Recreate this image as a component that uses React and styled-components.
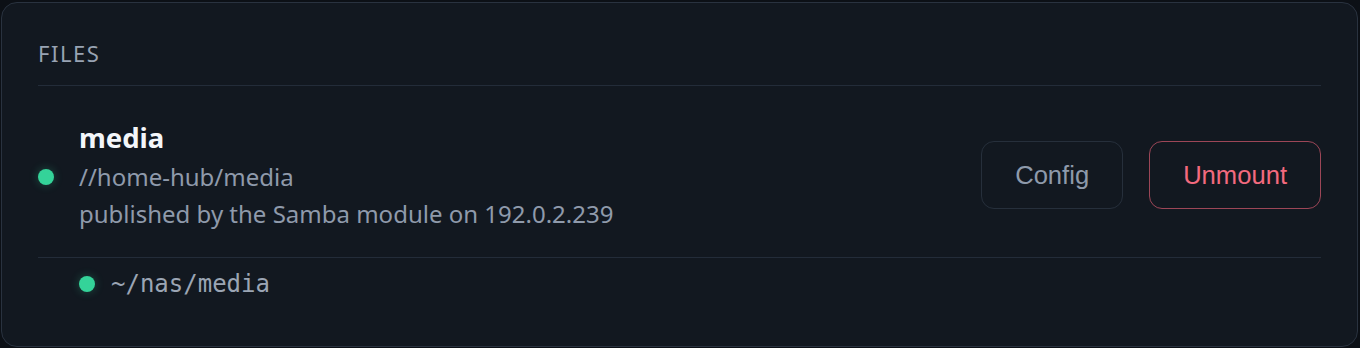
import React from 'react';
import styled, { createGlobalStyle } from 'styled-components';

const GlobalStyle = createGlobalStyle`
  html, body {
    margin: 0;
    padding: 0;
    background: #0c1016;
  }

  body {
    font-family: 'Noto Sans', 'DejaVu Sans', sans-serif;
  }
`;

const Page = styled.div`
  padding: 2px 2px 2px 1px;
`;

const Card = styled.section`
  background: #121820;
  border: 1px solid #29323f;
  border-radius: 16px;
  padding: 36px;
`;

const Header = styled.h2`
  margin: 0;
  padding-bottom: 17px;
  border-bottom: 1px solid #232c39;
  font-size: 22px;
  line-height: 29px;
  font-weight: 400;
  letter-spacing: 1.5px;
  color: #98a3b3;
  text-transform: uppercase;
`;

const ShareRow = styled.div`
  display: flex;
  align-items: center;
  padding: 31px 0 25px;
  border-bottom: 1px solid #232c39;
`;

const Dot = styled.span`
  flex: none;
  width: 16px;
  height: 16px;
  border-radius: 50%;
  background: #34d399;
  box-shadow: 0 0 10px rgba(52, 211, 153, 0.3);
  margin-right: ${(p) => p.$gap}px;
  margin-top: ${(p) => p.$drop || 0}px;
`;

const Info = styled.div`
  flex: 1;
  min-width: 0;
  padding-top: 1px;
`;

const Title = styled.div`
  font-size: 27.5px;
  line-height: 40px;
  font-weight: 700;
  color: #f3f6fa;
`;

const Meta = styled.div`
  font-size: 24px;
  line-height: 37px;
  color: #8f9aab;
`;

const Actions = styled.div`
  display: flex;
  gap: 26px;
  margin-top: 1px;
`;

const Button = styled.button`
  height: 68px;
  padding: 0 33px;
  border-radius: 13px;
  background: transparent;
  font-family: 'Liberation Sans', Arial, sans-serif;
  font-size: 25.6px;
  cursor: pointer;
  border: 1px solid ${(p) => (p.$danger ? '#9c4657' : '#262f3b')};
  color: ${(p) => (p.$danger ? '#f26a7e' : '#8e9aab')};
`;

const MountRow = styled.div`
  display: flex;
  align-items: center;
  padding: 8px 0 8px 41px;
`;

const Path = styled.span`
  font-family: 'DejaVu Sans Mono', 'Liberation Mono', monospace;
  font-size: 24px;
  line-height: 36px;
  color: #9ba5b4;
`;

export default function App() {
  return (
    <Page>
      <GlobalStyle />
      <Card>
        <Header>Files</Header>
        <ShareRow>
          <Dot $gap={25} $drop={4} />
          <Info>
            <Title>media</Title>
            <Meta>//home-hub/media</Meta>
            <Meta>published by the Samba module on 192.0.2.239</Meta>
          </Info>
          <Actions>
            <Button>Config</Button>
            <Button $danger>Unmount</Button>
          </Actions>
        </ShareRow>
        <MountRow>
          <Dot $gap={16} />
          <Path>~/nas/media</Path>
        </MountRow>
      </Card>
    </Page>
  );
}
